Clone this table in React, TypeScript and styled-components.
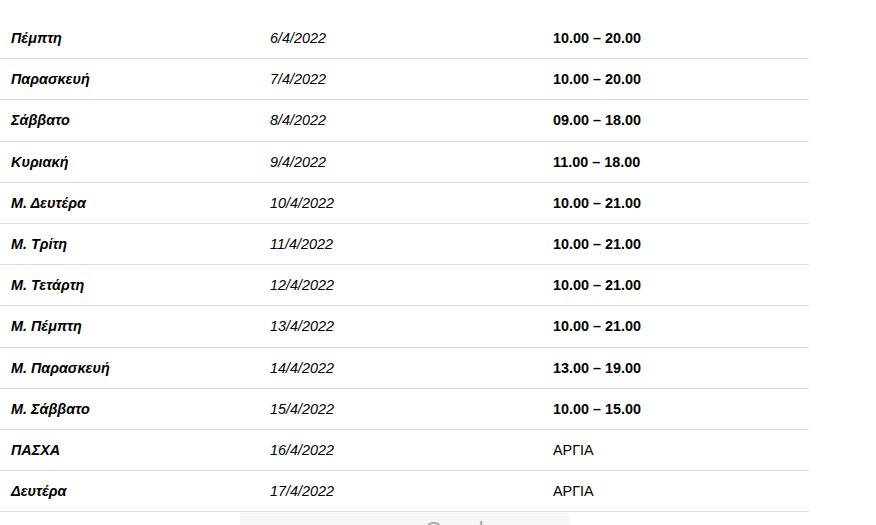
import React from "react";
import styled, { createGlobalStyle } from "styled-components";

const Global = createGlobalStyle`
  html, body { margin: 0; padding: 0; background: #fff; }
  body { font-family: "Liberation Sans", Arial, sans-serif; color: #000; }
`;

const Page = styled.div`
  padding-top: 18px;
  width: 809px;
`;

const Table = styled.div`
  display: flex;
  flex-direction: column;
`;

const Row = styled.div`
  display: grid;
  grid-template-columns: 259px 283px 1fr;
  align-items: center;
  height: 41.2px;
  box-sizing: border-box;
  border-bottom: 1px solid #dcdcdc;
`;

const Cell = styled.div<{ $kind: "day" | "date" | "time" | "off" }>`
  padding-left: 11px;
  font-size: 14.4px;
  line-height: 16px;
  font-style: ${(p) => (p.$kind === "day" || p.$kind === "date" ? "italic" : "normal")};
  font-weight: ${(p) => (p.$kind === "day" || p.$kind === "time" ? 700 : 400)};
  white-space: nowrap;
`;

const Widget = styled.div`
  margin-left: 240px;
  width: 330px;
  height: 30px;
  margin-top: 1px;
  background: #f7f7f7;
  display: flex;
  align-items: flex-start;
  overflow: hidden;
  color: #a8a8a8;
  font-size: 22px;
  line-height: 30px;
`;

const WidgetText = styled.span<{ $left: number }>`
  padding-left: ${(p) => p.$left}px;
  margin-top: 2px;
`;

const rows: [string, string, string, boolean][] = [
  ["Πέμπτη", "6/4/2022", "10.00 – 20.00", false],
  ["Παρασκευή", "7/4/2022", "10.00 – 20.00", false],
  ["Σάββατο", "8/4/2022", "09.00 – 18.00", false],
  ["Κυριακή", "9/4/2022", "11.00 – 18.00", false],
  ["Μ. Δευτέρα", "10/4/2022", "10.00 – 21.00", false],
  ["Μ. Τρίτη", "11/4/2022", "10.00 – 21.00", false],
  ["Μ. Τετάρτη", "12/4/2022", "10.00 – 21.00", false],
  ["Μ. Πέμπτη", "13/4/2022", "10.00 – 21.00", false],
  ["Μ. Παρασκευή", "14/4/2022", "13.00 – 19.00", false],
  ["Μ. Σάββατο", "15/4/2022", "10.00 – 15.00", false],
  ["ΠΑΣΧΑ", "16/4/2022", "ΑΡΓΙΑ", true],
  ["Δευτέρα", "17/4/2022", "ΑΡΓΙΑ", true],
];

export default function App() {
  return (
    <Page>
      <Global />
      <Table>
        {rows.map(([day, date, time, off]) => (
          <Row key={date}>
            <Cell $kind="day">{day}</Cell>
            <Cell $kind="date">{date}</Cell>
            <Cell $kind={off ? "off" : "time"}>{time}</Cell>
          </Row>
        ))}
      </Table>
      <Widget>
        <WidgetText $left={3}>←</WidgetText>
        <WidgetText $left={160}>Google</WidgetText>
      </Widget>
    </Page>
  );
}
